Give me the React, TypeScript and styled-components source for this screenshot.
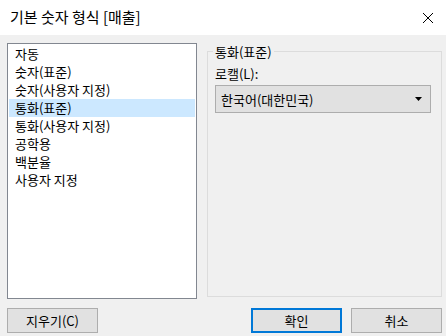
import React, { useState } from 'react';
import styled, { createGlobalStyle } from 'styled-components';

const GlobalStyle = createGlobalStyle`
  html, body {
    margin: 0;
    padding: 0;
    background: #ffffff;
  }
  body {
    font-family: 'Noto Sans CJK KR', 'Noto Sans', sans-serif;
    font-size: 13px;
    color: #000000;
  }
`;

const formats = [
  '자동',
  '숫자(표준)',
  '숫자(사용자 지정)',
  '통화(표준)',
  '통화(사용자 지정)',
  '공학용',
  '백분율',
  '사용자 지정',
];

const Dialog = styled.div`
  width: 446px;
  height: 336px;
  display: flex;
  flex-direction: column;
  background: #f0f0f0;
`;

const TitleBar = styled.div`
  height: 35px;
  flex-shrink: 0;
  background: #ffffff;
  display: flex;
  align-items: center;
  justify-content: space-between;
  padding: 0 11px 0 10px;
  box-sizing: border-box;
`;

const Title = styled.span`
  font-size: 15px;
  line-height: 20px;
  margin-top: -1px;
`;

const CloseButton = styled.div`
  width: 12px;
  height: 12px;
  display: flex;
  margin-right: 1px;
`;

const Body = styled.div`
  flex: 1;
  display: flex;
  flex-direction: column;
  padding: 8px 4px 0 7px;
`;

const Main = styled.div`
  display: flex;
  gap: 10px;
`;

const FormatList = styled.ul`
  width: 191px;
  height: 256px;
  box-sizing: border-box;
  margin: 0;
  padding: 1px;
  list-style: none;
  background: #ffffff;
  border: 1px solid #828790;
`;

const FormatItem = styled.li<{ $selected?: boolean }>`
  height: 18px;
  line-height: 18px;
  padding-left: 6px;
  background: ${(p) => (p.$selected ? '#cce8ff' : 'transparent')};
  cursor: default;
`;

const Group = styled.fieldset`
  width: 236px;
  height: 254px;
  box-sizing: border-box;
  margin: 0;
  padding: 0 10px 0 7px;
  border: 1px solid #dcdcdc;
`;

const Legend = styled.legend`
  margin-left: -2px;
  padding: 0 2px;
  line-height: 17px;
`;

const Label = styled.div`
  line-height: 17px;
  margin-top: 5px;
`;

const Select = styled.div`
  margin-top: 3px;
  width: 216px;
  height: 28px;
  box-sizing: border-box;
  background: #e1e1e1;
  border: 1px solid #adadad;
  display: flex;
  align-items: center;
  justify-content: space-between;
  padding: 0 8px 0 5px;
`;

const Buttons = styled.div`
  display: flex;
  margin-top: 9px;
`;

const Button = styled.button<{ $primary?: boolean }>`
  width: ${(p) => (p.$primary ? '91px' : '91px')};
  height: 25px;
  box-sizing: border-box;
  font-family: inherit;
  font-size: 13px;
  color: #000000;
  background: #e1e1e1;
  border: ${(p) => (p.$primary ? '2px solid #0078d7' : '1px solid #adadad')};
  padding: 0;
  margin: 0;
  line-height: 1;
`;

const Spacer = styled.div`
  flex: 1;
`;

const ButtonGap = styled.div`
  width: 9px;
`;

const App = () => {
  const [selected, setSelected] = useState<number>(3);

  return (
    <>
      <GlobalStyle />
      <Dialog>
        <TitleBar>
          <Title>기본 숫자 형식 [매출]</Title>
          <CloseButton>
            <svg width="12" height="12" viewBox="0 0 12 12">
              <path d="M1 1 L11 11 M11 1 L1 11" stroke="#000" strokeWidth="1" fill="none" />
            </svg>
          </CloseButton>
        </TitleBar>
        <Body>
          <Main>
            <FormatList>
              {formats.map((f, i) => (
                <FormatItem key={f} $selected={i === selected} onClick={() => setSelected(i)}>
                  {f}
                </FormatItem>
              ))}
            </FormatList>
            <Group>
              <Legend>{formats[selected]}</Legend>
              <Label>로캘(L):</Label>
              <Select>
                <span>한국어(대한민국)</span>
                <svg width="7" height="4" viewBox="0 0 7 4">
                  <path d="M0 0 H7 L3.5 4 Z" fill="#000" />
                </svg>
              </Select>
            </Group>
          </Main>
          <Buttons>
            <Button>지우기(C)</Button>
            <Spacer />
            <Button $primary>확인</Button>
            <ButtonGap />
            <Button>취소</Button>
          </Buttons>
        </Body>
      </Dialog>
    </>
  );
};

export default App;
